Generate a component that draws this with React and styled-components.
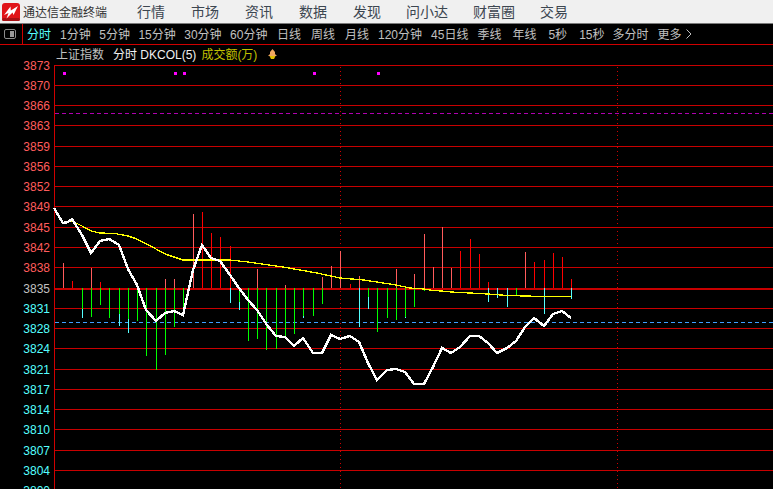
import React from "react";
import styled, { createGlobalStyle } from "styled-components";

const Global = createGlobalStyle`
  html, body { margin: 0; padding: 0; background: #000; }
  body { font-family: "Liberation Sans", "Noto Sans CJK SC", sans-serif; }
`;

const Page = styled.div`
  width: 773px;
  height: 489px;
  overflow: hidden;
  background: #000;
  display: flex;
  flex-direction: column;
`;

const TitleBar = styled.header`
  height: 23px;
  box-sizing: content-box;
  background: #f0f0f0;
  border-bottom: 1px solid #7a7a7a;
  display: flex;
  align-items: center;
  padding-left: 2px;
`;

const AppName = styled.span`
  margin-left: 3px;
  width: 114px;
  font-size: 12px;
  color: #333;
  padding-bottom: 1px;
`;

const Menu = styled.nav`
  display: flex;
  align-items: center;
  padding-bottom: 2px;
`;

const MenuItem = styled.span`
  font-size: 14px;
  color: #3c4650;
  margin-left: ${(p) => p.$lead}px;
`;

const TabBar = styled.div`
  height: 20px;
  border-bottom: 1px solid #d00000;
  display: flex;
  align-items: center;
`;

const ToggleCell = styled.div`
  height: 20px;
  border-right: 1px solid #d00000;
  display: flex;
  align-items: center;
  padding-left: 4px;
  box-sizing: border-box;
  width: 23px;
`;

const Toggle = styled.span`
  width: 12px;
  height: 10px;
  box-sizing: border-box;
  border: 1px solid #8c8c8c;
  border-radius: 2px;
  display: flex;
  justify-content: flex-end;
  padding: 1px;
  &::after {
    content: "";
    width: 4px;
    background: #9a9a9a;
  }
`;

const Tab = styled.span`
  font-size: 12px;
  white-space: nowrap;
  padding-bottom: 1px;
  margin-left: ${(p) => p.$lead}px;
  color: ${(p) => (p.$active ? "#55ffff" : "#c0c0c0")};
`;

const InfoRow = styled.div`
  height: 20px;
  box-sizing: border-box;
  padding: 0 0 3px 56px;
  display: flex;
  align-items: center;
  font-size: 12px;
`;

const Index = styled.span`
  color: #c0c0c0;
  margin-right: 9px;
`;

const Study = styled.span`
  color: #f0f0f0;
  margin-right: 5px;
`;

const Volume = styled.span`
  color: #c0c000;
  margin-right: 11px;
`;

const Chart = styled.svg`
  display: block;
  width: 773px;
  height: 424px;
  overflow: visible;
  shape-rendering: crispEdges;
`;

const AxisLabel = styled.text`
  font-family: "Liberation Sans", sans-serif;
  font-size: 12px;
  text-anchor: end;
  shape-rendering: auto;
  fill: ${(p) => p.$tone};
`;

const PINK = "#ff5c5c";
const RED = "#ff0000";
const GREEN = "#00ff00";
const CYAN = "#55ffff";
const BASE = 288;

const ticks = [
  [3873, 65], [3870, 85], [3866, 105], [3863, 125], [3859, 146], [3856, 166],
  [3852, 186], [3849, 206], [3845, 227], [3842, 247], [3838, 267], [3835, 288],
  [3831, 308], [3828, 328], [3824, 348], [3821, 369], [3817, 389], [3814, 409],
  [3810, 429], [3807, 450], [3804, 470], [3800, 490],
];

// x, top of the rising bar, colour
const rising = [
  [63, 263, PINK], [72, 281, RED], [91, 268, PINK], [100, 282, RED], [165, 279, PINK],
  [174, 279, PINK], [193, 214, PINK], [202, 212, RED], [211, 233, RED], [220, 237, RED],
  [230, 246, RED], [257, 269, PINK], [285, 285, PINK], [322, 277, PINK], [331, 266, PINK],
  [340, 251, PINK], [350, 284, RED], [359, 276, PINK], [396, 269, PINK], [414, 274, PINK],
  [424, 234, PINK], [433, 267, PINK], [442, 227, PINK], [451, 268, PINK], [460, 251, RED],
  [470, 239, RED], [479, 254, RED], [488, 282, RED], [525, 252, PINK], [534, 262, RED],
  [544, 260, RED], [553, 253, RED], [562, 257, RED], [571, 279, RED],
];

// x, end of the green part, end of the cyan part
const falling = [
  [82, 309, 318], [91, 317, 317], [100, 305, 305], [109, 318, 318], [119, 314, 326],
  [128, 319, 333], [137, 321, 321], [146, 356, 356], [156, 370, 370], [165, 355, 355],
  [174, 327, 327], [183, 315, 315], [230, 288, 303], [239, 302, 310], [248, 341, 341],
  [257, 339, 339], [266, 350, 350], [276, 349, 349], [285, 337, 337], [294, 334, 334],
  [303, 316, 318], [313, 316, 316], [322, 304, 304], [359, 288, 327], [368, 297, 309],
  [377, 332, 332], [387, 318, 318], [396, 320, 320], [405, 317, 318], [414, 307, 307],
  [424, 291, 291], [488, 288, 302], [497, 288, 298], [507, 288, 307], [516, 295, 295],
  [544, 288, 314], [571, 288, 299],
];

const price = [
  [54, 208], [63, 223], [68, 222], [72, 219], [82, 235], [91, 253], [100, 241], [109, 239],
  [119, 245], [128, 269], [137, 285], [146, 310], [156, 321], [165, 313], [174, 311],
  [183, 315], [193, 270], [202, 245], [211, 258], [220, 261], [230, 275], [239, 288],
  [248, 300], [257, 310], [267, 325], [276, 336], [285, 337], [294, 346], [303, 338],
  [313, 353], [322, 353], [331, 335], [340, 339], [350, 336], [359, 342], [368, 363],
  [377, 380], [387, 370], [396, 369], [405, 372], [414, 384], [424, 384], [433, 367],
  [442, 348], [451, 353], [460, 347], [470, 336], [479, 336], [488, 343], [497, 353],
  [507, 348], [516, 341], [525, 327], [534, 318], [544, 326], [553, 314], [562, 311],
  [571, 318],
];

const average = [
  [63, 223], [72, 221], [82, 226], [91, 231], [100, 233], [115, 233.5], [128, 236],
  [137, 239], [156, 249], [165, 254], [174, 257], [183, 260], [230, 260], [248, 262],
  [283, 267], [317, 273], [340, 278], [364, 280], [396, 285], [410, 288], [424, 289],
  [433, 290.5], [442, 291], [451, 292], [470, 293], [488, 294], [507, 295.5], [525, 296],
  [544, 296.5], [571, 296.5],
];

const markers = [63, 174, 183, 313, 377];

const toPoints = (list) => list.map(([x, y]) => `${x},${y}`).join(" ");

const menu = [
  ["行情", 0], ["市场", 26], ["资讯", 26], ["数据", 26], ["发现", 26],
  ["问小达", 25], ["财富圈", 25], ["交易", 25],
];

const tabs = [
  ["分时", 4, true], ["1分钟", 9], ["5分钟", 8.5], ["15分钟", 8.5], ["30分钟", 8.5],
  ["60分钟", 8.5], ["日线", 9.5], ["周线", 10], ["月线", 10], ["120分钟", 9],
  ["45日线", 9], ["季线", 9], ["年线", 11], ["5秒", 12], ["15秒", 12],
  ["多分时", 8], ["更多", 9],
];

const Logo = () => (
  <svg width="18" height="18" viewBox="0 0 18 18" aria-hidden="true">
    <rect x="0" y="0" width="18" height="18" rx="3" fill="#e01418" />
    <rect x="0" y="15" width="18" height="3" rx="1.5" fill="#a81014" />
    <path d="M2 12 L8.5 3.5 L8.8 7.5 L16 3 L11.5 12 L10.5 9.5 L4.5 15.5 L6.5 10 Z" fill="#fff" />
  </svg>
);

const Chevron = () => (
  <svg width="6" height="10" viewBox="0 0 6 10" style={{ marginLeft: 4 }} aria-hidden="true">
    <path d="M0.5 0.5 L5 5 L0.5 9.5" fill="none" stroke="#c0c0c0" />
  </svg>
);

const Alert = () => (
  <svg width="9" height="10" viewBox="0 0 9 10" style={{ flexShrink: 0 }} aria-hidden="true">
    <path d="M4.5 0 L7 3 L7 5 L9 7 L0 7 L2 5 L2 3 Z" fill="#f2a860" />
    <path d="M1.5 7 H7.5 L6 10 H3 Z" fill="#e0c000" />
  </svg>
);

export default function App() {
  return (
    <Page>
      <Global />
      <TitleBar>
        <Logo />
        <AppName>通达信金融终端</AppName>
        <Menu>
          {menu.map(([label, lead]) => (
            <MenuItem key={label} $lead={lead}>{label}</MenuItem>
          ))}
        </Menu>
      </TitleBar>
      <TabBar>
        <ToggleCell><Toggle /></ToggleCell>
        {tabs.map(([label, lead, active]) => (
          <Tab key={label} $lead={lead} $active={active}>{label}</Tab>
        ))}
        <Chevron />
      </TabBar>
      <InfoRow>
        <Index>上证指数</Index>
        <Study>分时 DKCOL(5)</Study>
        <Volume>成交额(万)</Volume>
        <Alert />
      </InfoRow>
      <Chart viewBox="0 65 773 424" aria-label="分时图">
        {ticks.map(([value, y]) => (
          <line
            key={value}
            x1="55"
            x2="773"
            y1={y + 0.5}
            y2={y + 0.5}
            stroke="#c80000"
            strokeWidth={value === 3835 ? 2 : 1}
          />
        ))}
        <line x1="54.5" x2="54.5" y1="65" y2="489" stroke="#d00000" />
        <line x1="340.5" x2="340.5" y1="67" y2="489" stroke="#d00000" strokeDasharray="1 3" />
        <line x1="617.5" x2="617.5" y1="67" y2="489" stroke="#d00000" strokeDasharray="1 3" />
        <line x1="55" x2="773" y1="113.5" y2="113.5" stroke="#b000b0" strokeDasharray="4 3" />
        <line x1="55" x2="773" y1="322.5" y2="322.5" stroke="#3f9fff" strokeDasharray="4 3" />
        {markers.map((x) => (
          <rect key={x} x={x} y="72" width="3" height="3" fill="#ff00ff" />
        ))}
        {rising.map(([x, top, color]) => (
          <line key={x} x1={x + 0.5} x2={x + 0.5} y1={top} y2={BASE} stroke={color} />
        ))}
        {falling.map(([x, green, cyan]) => (
          <g key={x}>
            <line x1={x + 0.5} x2={x + 0.5} y1={BASE} y2={green} stroke={GREEN} />
            {cyan > green && (
              <line x1={x + 0.5} x2={x + 0.5} y1={green} y2={cyan} stroke={CYAN} />
            )}
          </g>
        ))}
        <polyline points={toPoints(average)} fill="none" stroke="#ffff00" strokeWidth="1.3" />
        <polyline points={toPoints(price)} fill="none" stroke="#ffffff" strokeWidth="2.4" />
        {ticks.map(([value, y]) => (
          <AxisLabel
            key={value}
            x="50"
            y={y + 4.5}
            $tone={value > 3835 ? "#ff5c5c" : value === 3835 ? "#c0c0c0" : "#55ffff"}
          >
            {value}
          </AxisLabel>
        ))}
      </Chart>
    </Page>
  );
}
